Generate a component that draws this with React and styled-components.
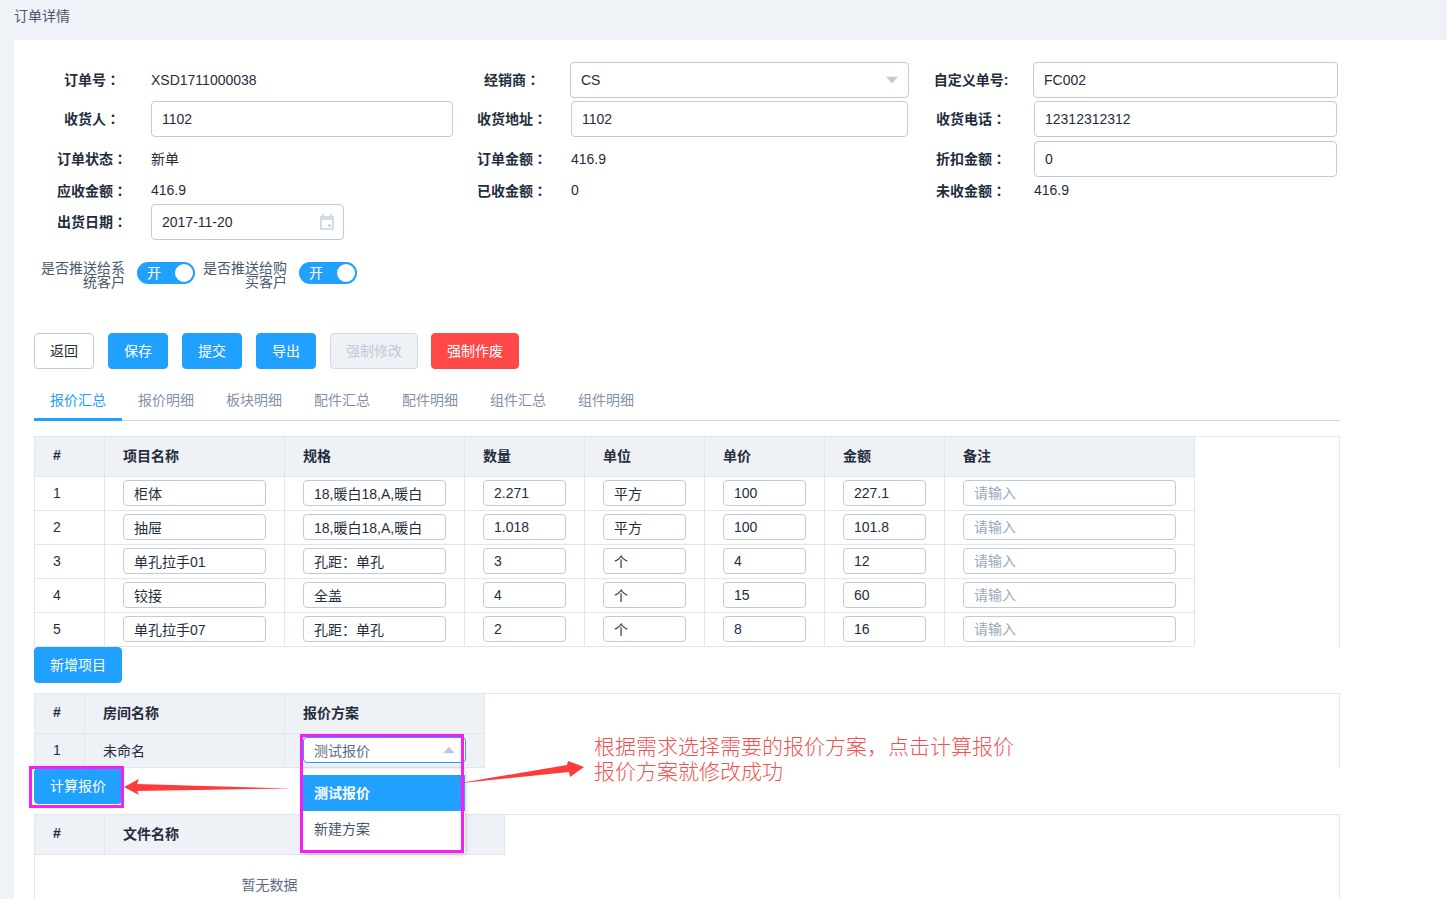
import React from 'react'
import styled, { createGlobalStyle } from 'styled-components'

const GlobalStyle = createGlobalStyle`
    html, body {
        margin: 0;
        height: 100%;
        overflow: hidden;
        background-color: #eff2f7;
    }
    * {
        box-sizing: border-box;
    }
    body, input, button {
        font-family: "Liberation Sans", "Noto Sans CJK SC", sans-serif;
        font-size: 14px;
        color: #1f2d3d;
    }
`

const Page = styled.div`
    height: 899px;
    overflow: hidden;
`
const Header = styled.div`
    height: 40px;
    padding: 6px 0 0 14px;
    line-height: 20px;
    color: #48576a;
`
const Panel = styled.div`
    position: relative;
    margin-left: 14px;
    height: 859px;
    padding: 22px 107px 0 20px;
    background-color: white;
`
const FormGrid = styled.div`
    display: grid;
    margin-left: -4px;
    grid-template-columns: 121px 302px 118px 337px 126px 303px;
    grid-template-rows: 39px 40px 36px 27px 36px;
`
const LabelBox = styled.div`
    height: ${(p) => (p.$low ? '27px' : '36px')};
    display: flex;
    align-items: center;
    justify-content: center;
    font-weight: bold;
    white-space: nowrap;
    padding: 0 0 2px ${(p) => (p.$first ? '3px' : '0')};
`
const Colon = styled.span`
    font-family: "Noto Sans CJK TC", sans-serif;
`
const Value = styled.div`
    height: ${(p) => (p.$low ? '27px' : '36px')};
    display: flex;
    align-items: center;
    padding-bottom: ${(p) => (p.$lift ? '2px' : '0')};
    color: #1f2d3d;
`
const Field = styled.div`
    position: relative;
    height: 36px;
    width: ${(p) => p.$width || 'auto'};
    margin: 0 ${(p) => (p.$wide ? '-1px' : '0')};
`
const Input = styled.input`
    display: block;
    width: 100%;
    height: 100%;
    padding: 3px 10px;
    border: 1px solid ${(p) => (p.$focus ? '#20a0ff' : '#bfcbd9')};
    border-radius: 4px;
    outline: none;
    background-color: white;
    color: ${(p) => (p.$focus ? '#5e6d82' : '#1f2d3d')};

    &::placeholder {
        color: #97a8be;
    }
`
const FieldIcon = styled.svg`
    position: absolute;
    right: ${(p) => p.$right}px;
    top: 50%;
    transform: translateY(-50%);
`
const SwitchRow = styled.div`
    display: flex;
    margin: 21px 0 0 7px;
    height: 28px;
`
const SwitchLabel = styled.div`
    width: 84px;
    text-align: right;
    line-height: 14px;
    color: #48576a;
    margin-right: 12px;
`
const Switch = styled.div`
    position: relative;
    width: 58px;
    height: 22px;
    margin: 1px 8px 0 0;
    padding-left: 10px;
    border-radius: 11px;
    background-color: #20a0ff;
    color: white;
    line-height: 22px;

    &::after {
        content: "";
        position: absolute;
        right: 2px;
        top: 2px;
        width: 18px;
        height: 18px;
        border-radius: 50%;
        background-color: white;
    }
`
const ButtonRow = styled.div`
    display: flex;
    gap: 14px;
    margin-top: 44px;
`
const colors = {
    primary: 'background-color: #20a0ff; border-color: #20a0ff; color: white;',
    danger: 'background-color: #ff4949; border-color: #ff4949; color: white;',
    disabled: 'background-color: #eef1f6; border-color: #d1dbe5; color: #bfcbd9;',
    plain: 'background-color: white; border-color: #bfcbd9; color: #1f2d3d;',
}
const Button = styled.button`
    display: block;
    height: 36px;
    padding: 0 0 2px;
    width: ${(p) => p.$width || 60}px;
    margin-right: ${(p) => p.$shift || 0}px;
    border: 1px solid;
    border-radius: 4px;
    ${(p) => colors[p.$kind || 'primary']}
`
const Tabs = styled.div`
    display: flex;
    height: 40px;
    margin-top: 12px;
    border-bottom: 1px solid #d1dbe5;
`
const Tab = styled.div`
    width: 88px;
    height: 40px;
    line-height: 39px;
    text-align: center;
    border-bottom: 3px solid ${(p) => (p.$active ? '#20a0ff' : 'transparent')};
    color: ${(p) => (p.$active ? '#20a0ff' : '#8391a5')};
`
const TableBox = styled.div`
    margin-top: ${(p) => p.$top}px;
    border: 1px solid #dfe6ec;
    border-bottom: 0;
    height: ${(p) => (p.$tall ? '100px' : 'auto')};
`
const Table = styled.table`
    table-layout: fixed;
    border-collapse: separate;
    border-spacing: 0;
    width: ${(p) => p.$width}px;
`
const Th = styled.th`
    height: 40px;
    padding: 0 18px 4px;
    text-align: left;
    font-weight: bold;
    color: #1f2d3d;
    background-color: #eef1f6;
    border-right: 1px solid #dfe6ec;
    border-bottom: 1px solid #dfe6ec;
`
const Td = styled.td`
    height: 34px;
    padding: 3px 18px 4px;
    color: #1f2d3d;
    background-color: ${(p) => (p.$hover ? '#eef1f6' : 'white')};
    border-right: 1px solid #dfe6ec;
    border-bottom: 1px solid #dfe6ec;
`
const CellInput = styled.div`
    position: relative;
    height: 26px;
`
const EmptyRow = styled.div`
    width: 469px;
    height: 60px;
    line-height: 60px;
    text-align: center;
    color: #5e6d82;
`
const Dropdown = styled.div`
    position: absolute;
    left: 0;
    top: 32px;
    width: 162px;
    padding: 6px 0;
    z-index: 2;
    background-color: white;
    box-shadow: 0 1px 5px rgba(0, 0, 0, 0.22);
`
const Option = styled.div`
    height: 36px;
    line-height: 36px;
    padding-left: 11px;
    font-weight: ${(p) => (p.$selected ? 'bold' : 'normal')};
    background-color: ${(p) => (p.$selected ? '#20a0ff' : 'white')};
    color: ${(p) => (p.$selected ? 'white' : '#48576a')};
`
const MagentaBox = styled.div`
    position: absolute;
    z-index: 3;
    border: 3px solid #f81cf5;
    pointer-events: none;
    left: ${(p) => p.$left}px;
    top: ${(p) => p.$top}px;
    width: ${(p) => p.$width}px;
    height: ${(p) => p.$height}px;
`
const CalcWrap = styled.div`
    position: relative;
    width: 88px;
`
const Note = styled.div`
    position: absolute;
    left: 580px;
    top: 694px;
    z-index: 4;
    font-size: 21px;
    line-height: 25px;
    font-weight: 300;
    white-space: nowrap;
    color: #f4504f;
`
const Arrow = styled.svg`
    position: absolute;
    z-index: 4;
    left: ${(p) => p.$left}px;
    top: ${(p) => p.$top}px;
`

const tabs = ['报价汇总', '报价明细', '板块明细', '配件汇总', '配件明细', '组件汇总', '组件明细']
const headers = ['#', '项目名称', '规格', '数量', '单位', '单价', '金额', '备注']
const widths = [70, 180, 180, 120, 120, 120, 120, 250]
const rows = [
    ['柜体', '18,暖白18,A,暖白', '2.271', '平方', '100', '227.1'],
    ['抽屉', '18,暖白18,A,暖白', '1.018', '平方', '100', '101.8'],
    ['单孔拉手01', '孔距：单孔', '3', '个', '4', '12'],
    ['铰接', '全盖', '4', '个', '15', '60'],
    ['单孔拉手07', '孔距：单孔', '2', '个', '8', '16'],
]

const Label = ({ text, first, low, plain }) => (
    <LabelBox $first={first} $low={low}>
        {text}
        {plain ? ':' : <Colon>：</Colon>}
    </LabelBox>
)

const Triangle = ({ up }) => (
    <FieldIcon $right={11} width="12" height="7" viewBox="0 0 12 7">
        <path d={up ? 'M0 7 L6 0 L12 7 Z' : 'M0 0 L12 0 L6 7 Z'} fill="#bfcbd9" />
    </FieldIcon>
)

const Calendar = () => (
    <FieldIcon $right={10} width="14" height="16" viewBox="0 0 14 16">
        <path
            fillRule="evenodd"
            d="M2 0h2v2h6V0h2v2h2v14H0V2h2V0zM2 6v8h10V6H2zM8 10h3v3H8v-3z"
            fill="#d1dbe5"
        />
    </FieldIcon>
)

const App = () => {
    return (
        <Page>
            <GlobalStyle />
            <Header>订单详情</Header>
            <Panel>
                <FormGrid>
                    <Label first text="订单号" />
                    <Value>XSD1711000038</Value>
                    <Label text="经销商" />
                    <Field $wide>
                        <Input readOnly value="CS" />
                        <Triangle />
                    </Field>
                    <Label plain text="自定义单号" />
                    <Field $wide>
                        <Input readOnly value="FC002" />
                    </Field>

                    <Label first text="收货人" />
                    <Field><Input readOnly value="1102" /></Field>
                    <Label text="收货地址" />
                    <Field><Input readOnly value="1102" /></Field>
                    <Label text="收货电话" />
                    <Field><Input readOnly value="12312312312" /></Field>

                    <Label first text="订单状态" />
                    <Value $lift>新单</Value>
                    <Label text="订单金额" />
                    <Value>416.9</Value>
                    <Label text="折扣金额" />
                    <Field><Input readOnly value="0" /></Field>

                    <Label first low text="应收金额" />
                    <Value $low $lift>416.9</Value>
                    <Label low text="已收金额" />
                    <Value $low $lift>0</Value>
                    <Label low text="未收金额" />
                    <Value $low $lift>416.9</Value>

                    <Label first text="出货日期" />
                    <Field $width="193px">
                        <Input readOnly value="2017-11-20" />
                        <Calendar />
                    </Field>
                </FormGrid>

                <SwitchRow>
                    <SwitchLabel>是否推送给系统客户</SwitchLabel>
                    <Switch>开</Switch>
                    <SwitchLabel>是否推送给购买客户</SwitchLabel>
                    <Switch>开</Switch>
                </SwitchRow>

                <ButtonRow>
                    <Button $kind="plain">返回</Button>
                    <Button>保存</Button>
                    <Button>提交</Button>
                    <Button>导出</Button>
                    <Button $kind="disabled" $width={88} $shift={-1}>强制修改</Button>
                    <Button $kind="danger" $width={88}>强制作废</Button>
                </ButtonRow>

                <Tabs>
                    {tabs.map((t, i) => (
                        <Tab key={t} $active={i === 0}>{t}</Tab>
                    ))}
                </Tabs>

                <TableBox $top={15}>
                    <Table $width={1160}>
                        <colgroup>
                            {widths.map((w, i) => <col key={i} width={w} />)}
                        </colgroup>
                        <thead>
                            <tr>{headers.map((h) => <Th key={h}>{h}</Th>)}</tr>
                        </thead>
                        <tbody>
                            {rows.map((row, i) => (
                                <tr key={i}>
                                    <Td>{i + 1}</Td>
                                    {row.map((v, j) => (
                                        <Td key={j}>
                                            <CellInput><Input readOnly value={v} /></CellInput>
                                        </Td>
                                    ))}
                                    <Td>
                                        <CellInput><Input readOnly placeholder="请输入" /></CellInput>
                                    </Td>
                                </tr>
                            ))}
                        </tbody>
                    </Table>
                </TableBox>
                <Button $width={88}>新增项目</Button>

                <TableBox $top={10}>
                    <Table $width={450}>
                        <colgroup>
                            <col width={50} />
                            <col width={200} />
                            <col width={200} />
                        </colgroup>
                        <thead>
                            <tr>
                                <Th>#</Th>
                                <Th>房间名称</Th>
                                <Th>报价方案</Th>
                            </tr>
                        </thead>
                        <tbody>
                            <tr>
                                <Td $hover>1</Td>
                                <Td $hover>未命名</Td>
                                <Td $hover>
                                    <CellInput>
                                        <Input $focus readOnly value="测试报价" />
                                        <Triangle up />
                                        <Dropdown>
                                            <Option $selected>测试报价</Option>
                                            <Option>新建方案</Option>
                                        </Dropdown>
                                        <MagentaBox $left={-3} $top={-3} $width={164} $height={119} />
                                    </CellInput>
                                </Td>
                            </tr>
                        </tbody>
                    </Table>
                </TableBox>
                <CalcWrap>
                    <Button $width={88}>计算报价</Button>
                    <MagentaBox $left={-5} $top={-2} $width={95} $height={42} />
                </CalcWrap>

                <TableBox $top={10} $tall>
                    <Table $width={470}>
                        <colgroup>
                            <col width={70} />
                            <col width={400} />
                        </colgroup>
                        <thead>
                            <tr>
                                <Th>#</Th>
                                <Th>文件名称</Th>
                            </tr>
                        </thead>
                    </Table>
                    <EmptyRow>暂无数据</EmptyRow>
                </TableBox>

                <Arrow $left={110} $top={739} width="170" height="18" viewBox="0 0 170 18">
                    <path d="M0 8 L15 0 L13 5 L168 9.5 L13 12 L15 16 Z" fill="#ff3a3a" />
                </Arrow>
                <Arrow $left={441} $top={720} width="130" height="26" viewBox="0 0 130 26">
                    <path d="M2 23.5 L112 5 L113 1 L129 7 L115 17 L114 12 Z" fill="#ff3a3a" />
                </Arrow>
                <Note>
                    根据需求选择需要的报价方案，点击计算报价
                    <br />
                    报价方案就修改成功
                </Note>
            </Panel>
        </Page>
    )
}

export default App
